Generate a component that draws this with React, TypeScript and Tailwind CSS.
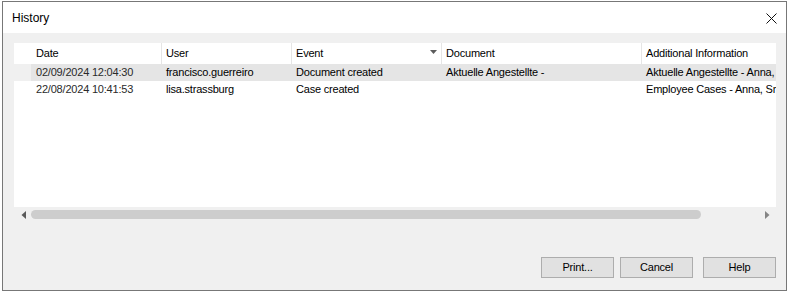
import React from "react";

const cols = [130, 130, 150, 200, 200];

function HeaderCell({ i, label, sort }: { i: number; label: string; sort?: boolean }) {
  return (
    <div
      className={
        "shrink-0 h-full flex items-center justify-between " +
        (i === 0 ? "pl-[5px]" : "pl-[4px] border-l border-[#e5e5e5]")
      }
      style={{ width: cols[i] }}
    >
      <span className="whitespace-nowrap">{label}</span>
      {sort && (
        <svg width="7" height="4" viewBox="0 0 7 4" className="mr-[4px] mt-[-3px]">
          <path d="M0 0 L7 0 L3.5 4 Z" fill="#5c5c5c" />
        </svg>
      )}
    </div>
  );
}

function Row({ cells, selected }: { cells: string[]; selected?: boolean }) {
  return (
    <div className="flex h-[17px] leading-[17px] whitespace-nowrap">
      <div className={"w-[17px] shrink-0 " + (selected ? "bg-[#f0f0f0]" : "bg-white")} />
      <div className={"flex flex-1 " + (selected ? "bg-[#e5e5e5]" : "")}>
        {cells.map((c, i) => (
          <div
            key={i}
            className={"shrink-0 overflow-hidden " + (i === 0 ? "pl-[5px] text-[#2a2a2a]" : "pl-[5px]")}
            style={{ width: cols[i] }}
          >
            {c}
          </div>
        ))}
      </div>
    </div>
  );
}

function Button({ label, className = "" }: { label: string; className?: string }) {
  return (
    <div
      className={
        "w-[73px] h-[21px] border border-[#adadad] bg-[#e1e1e1] flex items-center justify-center text-black " +
        className
      }
    >
      {label}
    </div>
  );
}

export default function App() {
  return (
    <div className="w-[789px] h-[293px] bg-white pt-px pl-[2px] font-['Liberation_Sans',Arial,sans-serif] text-[11px] tracking-[-0.2px] text-black">
      <div className="w-[785px] h-[290px] border border-[#777777] flex flex-col">
        <div className="h-[31px] shrink-0 bg-white flex items-center justify-between pl-[9px] pr-[9px]">
          <span className="text-[12px] tracking-normal text-black mt-[1px]">History</span>
          <svg width="11" height="11" viewBox="0 0 11 11" className="mt-[1px]">
            <path d="M0.5 0.5 L10.5 10.5 M10.5 0.5 L0.5 10.5" stroke="#111" strokeWidth="1" />
          </svg>
        </div>
        <div className="flex-1 bg-[#f0f0f0] flex flex-col pt-[10px] pl-[11px]">
          <div className="w-[762px] h-[179px] flex flex-col">
            <div className="h-[164px] bg-white overflow-hidden flex flex-col">
              <div className="h-[21px] flex shrink-0 whitespace-nowrap">
                <div className="w-[17px] shrink-0" />
                <HeaderCell i={0} label="Date" />
                <HeaderCell i={1} label="User" />
                <HeaderCell i={2} label="Event" sort />
                <HeaderCell i={3} label="Document" />
                <HeaderCell i={4} label="Additional Information" />
              </div>
              <Row
                selected
                cells={[
                  "02/09/2024 12:04:30",
                  "francisco.guerreiro",
                  "Document created",
                  "Aktuelle Angestellte -",
                  "Aktuelle Angestellte - Anna, Smith",
                ]}
              />
              <Row
                cells={[
                  "22/08/2024 10:41:53",
                  "lisa.strassburg",
                  "Case created",
                  "",
                  "Employee Cases - Anna, Smith",
                ]}
              />
            </div>
            <div className="h-[15px] flex items-center bg-[#f0f0f0]">
              <div className="w-[17px] shrink-0 flex items-center justify-center">
                <svg width="5" height="8" viewBox="0 0 5 8" className="ml-[1px]">
                  <path d="M5 0 L5 8 L0.5 4 Z" fill="#5a5a5a" />
                </svg>
              </div>
              <div className="w-[670px] h-[9px] rounded-full bg-[#cdcdcd] shrink-0" />
              <div className="flex-1" />
              <div className="w-[17px] shrink-0 flex items-center justify-start pl-[6px]">
                <svg width="5" height="8" viewBox="0 0 5 8">
                  <path d="M0 0 L0 8 L4.5 4 Z" fill="#858585" />
                </svg>
              </div>
            </div>
          </div>
          <div className="mt-[35px] flex justify-end pr-[10px]">
            <Button label="Print..." />
            <Button label="Cancel" className="ml-[6px]" />
            <Button label="Help" className="ml-[10px]" />
          </div>
        </div>
      </div>
    </div>
  );
}
